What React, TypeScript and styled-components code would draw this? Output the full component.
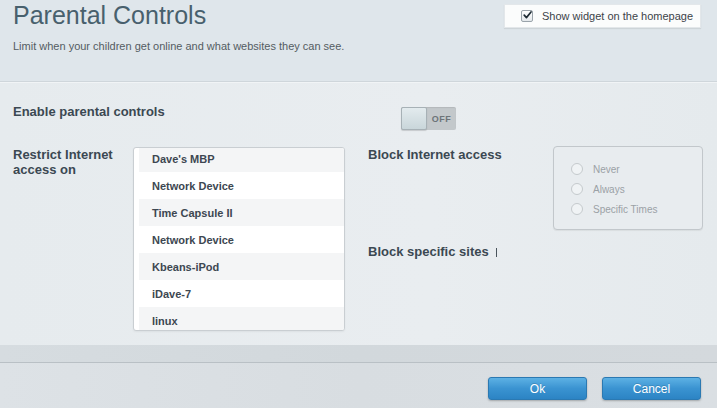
import React from "react";
import styled, { createGlobalStyle } from "styled-components";

const devices = [
  "Dave's MBP",
  "Network Device",
  "Time Capsule II",
  "Network Device",
  "Kbeans-iPod",
  "iDave-7",
  "linux",
];

const blockOptions = ["Never", "Always", "Specific Times"];

const GlobalStyle = createGlobalStyle`
  html, body {
    margin: 0;
    padding: 0;
    background: #e4e9ed;
  }
  body {
    font-family: "Liberation Sans", Arial, sans-serif;
  }
`;

const App: React.FC = () => {
  return (
    <>
      <GlobalStyle />
      <Page>
        <Header>
          <TitleRow>
            <Title>Parental Controls</Title>
            <WidgetToggle>
              <CheckBox>
                <svg width="11" height="10" viewBox="0 0 11 10">
                  <path
                    d="M1.5 5.2 L4.2 8.2 L9.8 1.2"
                    fill="none"
                    stroke="#1d2a33"
                    strokeWidth="2"
                    strokeLinecap="round"
                    strokeLinejoin="round"
                  />
                </svg>
              </CheckBox>
              <span>Show widget on the homepage</span>
            </WidgetToggle>
          </TitleRow>
          <Subtitle>
            Limit when your children get online and what websites they can see.
          </Subtitle>
        </Header>

        <Content>
          <EnableRow>
            <EnableLabel>Enable parental controls</EnableLabel>
            <Switch>
              <Knob />
              <SwitchText>OFF</SwitchText>
            </Switch>
          </EnableRow>

          <SettingsRow>
            <DeviceBlock>
              <FieldLabel $width={120}>
                Restrict Internet
                <br />
                access on
              </FieldLabel>
              <DeviceList>
                <DeviceScroll>
                  {devices.map((name, i) => (
                    <DeviceRow key={i} $striped={i % 2 === 0}>
                      {name}
                    </DeviceRow>
                  ))}
                </DeviceScroll>
              </DeviceList>
            </DeviceBlock>

            <RightColumn>
              <BlockRow>
                <FieldLabel>Block Internet access</FieldLabel>
                <RadioBox>
                  {blockOptions.map((opt) => (
                    <RadioItem key={opt}>
                      <RadioCircle />
                      {opt}
                    </RadioItem>
                  ))}
                </RadioBox>
              </BlockRow>
              <SitesRow>
                <FieldLabel>Block specific sites</FieldLabel>
                <Caret />
              </SitesRow>
            </RightColumn>
          </SettingsRow>
        </Content>

        <Band />
        <Footer>
          <ActionButton>Ok</ActionButton>
          <ActionButton>Cancel</ActionButton>
        </Footer>
      </Page>
    </>
  );
};

const Page = styled.div`
  width: 717px;
  height: 408px;
  overflow: hidden;
  display: flex;
  flex-direction: column;
  background: linear-gradient(90deg, #e6ebee 0%, #e9edf0 60%, #e5eaed 100%);
`;

const Header = styled.div`
  height: 81px;
  flex-shrink: 0;
  padding: 0 16px 0 13px;
  background: #dfe6eb;
  border-bottom: 1px solid #cfd6db;
  box-shadow: 0 1px 0 #f1f4f6;
`;

const TitleRow = styled.div`
  display: flex;
  justify-content: space-between;
  align-items: flex-start;
`;

const Title = styled.h1`
  margin: 0;
  font-family: "Liberation Sans", Arial, sans-serif;
  font-weight: normal;
  font-size: 25px;
  line-height: 30px;
  color: #48606d;
`;

const WidgetToggle = styled.div`
  margin-top: 4px;
  width: 197px;
  height: 24px;
  box-sizing: border-box;
  display: flex;
  align-items: center;
  gap: 9px;
  padding-left: 16px;
  background: #fbfcfc;
  border: 1px solid #e3e7ea;
  box-shadow: 0 1px 1px rgba(0, 0, 0, 0.08);
  font-size: 11px;
  color: #3c4349;
`;

const CheckBox = styled.span`
  width: 12px;
  height: 12px;
  box-sizing: border-box;
  border: 1px solid #9aa3aa;
  border-radius: 2px;
  background: linear-gradient(#ffffff, #e4e8eb);
  display: flex;
  align-items: center;
  justify-content: center;
  svg {
    margin-top: -2px;
    margin-left: 1px;
  }
`;

const Subtitle = styled.p`
  margin: 9px 0 0;
  font-size: 11px;
  line-height: 14px;
  color: #545c62;
`;

const Content = styled.div`
  flex: 1;
  padding: 22px 14px 0 13px;
`;

const EnableRow = styled.div`
  display: flex;
  align-items: flex-start;
`;

const EnableLabel = styled.div`
  width: 388px;
  font-size: 13px;
  line-height: 16px;
  font-weight: bold;
  color: #3b4852;
`;

const Switch = styled.div`
  margin-top: 3px;
  width: 55px;
  height: 23px;
  display: flex;
  background: #c3c8cb;
  border-radius: 2px;
  box-shadow: inset 0 1px 1px rgba(0, 0, 0, 0.08);
`;

const Knob = styled.div`
  width: 26px;
  height: 23px;
  box-sizing: border-box;
  border: 1px solid #a7b1b6;
  border-radius: 2px;
  background: linear-gradient(#e3ebee, #c9d6da);
  box-shadow: 0 1px 1px rgba(0, 0, 0, 0.15);
`;

const SwitchText = styled.span`
  flex: 1;
  display: flex;
  align-items: center;
  justify-content: center;
  font-size: 9px;
  font-weight: bold;
  letter-spacing: 0.5px;
  color: #6c7479;
`;

const SettingsRow = styled.div`
  margin-top: 17px;
  display: flex;
  align-items: flex-start;
  gap: 23px;
`;

const DeviceBlock = styled.div`
  display: flex;
  align-items: flex-start;
`;

const FieldLabel = styled.div<{ $width?: number }>`
  ${({ $width }) => ($width ? `width: ${$width}px;` : "")}
  font-size: 13px;
  line-height: 15px;
  font-weight: bold;
  color: #3b4852;
`;

const DeviceList = styled.div`
  width: 212px;
  height: 184px;
  box-sizing: border-box;
  border: 1px solid #c9ced2;
  border-radius: 3px;
  background: #ffffff;
  overflow: hidden;
  padding-left: 5px;
  box-shadow: 0 1px 2px rgba(0, 0, 0, 0.05);
`;

const DeviceScroll = styled.div`
  margin-top: -3px;
`;

const DeviceRow = styled.div<{ $striped: boolean }>`
  height: 27px;
  display: flex;
  align-items: center;
  padding-left: 13px;
  font-size: 11px;
  font-weight: bold;
  color: #3d4751;
  background: ${({ $striped }) => ($striped ? "#f4f5f6" : "#ffffff")};
`;

const RightColumn = styled.div`
  width: 335px;
  display: flex;
  flex-direction: column;
`;

const BlockRow = styled.div`
  display: flex;
  justify-content: space-between;
  align-items: flex-start;
`;

const RadioBox = styled.div`
  margin-top: -1px;
  width: 150px;
  height: 84px;
  box-sizing: border-box;
  padding: 12px 0 0 17px;
  border: 1px solid #c2c7cb;
  border-radius: 4px;
  background: #e8ecef;
  box-shadow: 0 1px 1px rgba(0, 0, 0, 0.06);
`;

const RadioItem = styled.div`
  height: 20px;
  display: flex;
  align-items: center;
  gap: 10px;
  font-size: 10px;
  color: #9ba1a6;
`;

const RadioCircle = styled.span`
  width: 12px;
  height: 12px;
  box-sizing: border-box;
  border-radius: 50%;
  border: 1px solid #c5cacd;
  background: #f0f3f5;
`;

const SitesRow = styled.div`
  margin-top: 14px;
  display: flex;
  align-items: center;
  gap: 7px;
`;

const Caret = styled.span`
  width: 1px;
  height: 9px;
  margin-top: 1px;
  background: #4a545c;
`;

const Band = styled.div`
  height: 17px;
  flex-shrink: 0;
  background: linear-gradient(90deg, #d6dce0, #d2d8dc 50%, #d4d9dd);
  border-bottom: 1px solid #b9c0c5;
`;

const Footer = styled.div`
  height: 45px;
  flex-shrink: 0;
  box-sizing: border-box;
  padding: 14px 16px 0 0;
  display: flex;
  justify-content: flex-end;
  gap: 15px;
  background: linear-gradient(90deg, #dde2e6, #d8dde1 50%, #dadfe3);
`;

const ActionButton = styled.button`
  width: 99px;
  height: 23px;
  border: 1px solid #2b79b2;
  border-radius: 3px;
  background: linear-gradient(#5db1e4, #3a93d1 50%, #2c84c4);
  box-shadow: 0 1px 2px rgba(0, 0, 0, 0.25);
  font-family: "Liberation Sans", Arial, sans-serif;
  font-size: 12px;
  color: #ffffff;
  text-shadow: 0 -1px 0 rgba(0, 0, 0, 0.15);
  cursor: pointer;
  padding: 0;
`;

export default App;
